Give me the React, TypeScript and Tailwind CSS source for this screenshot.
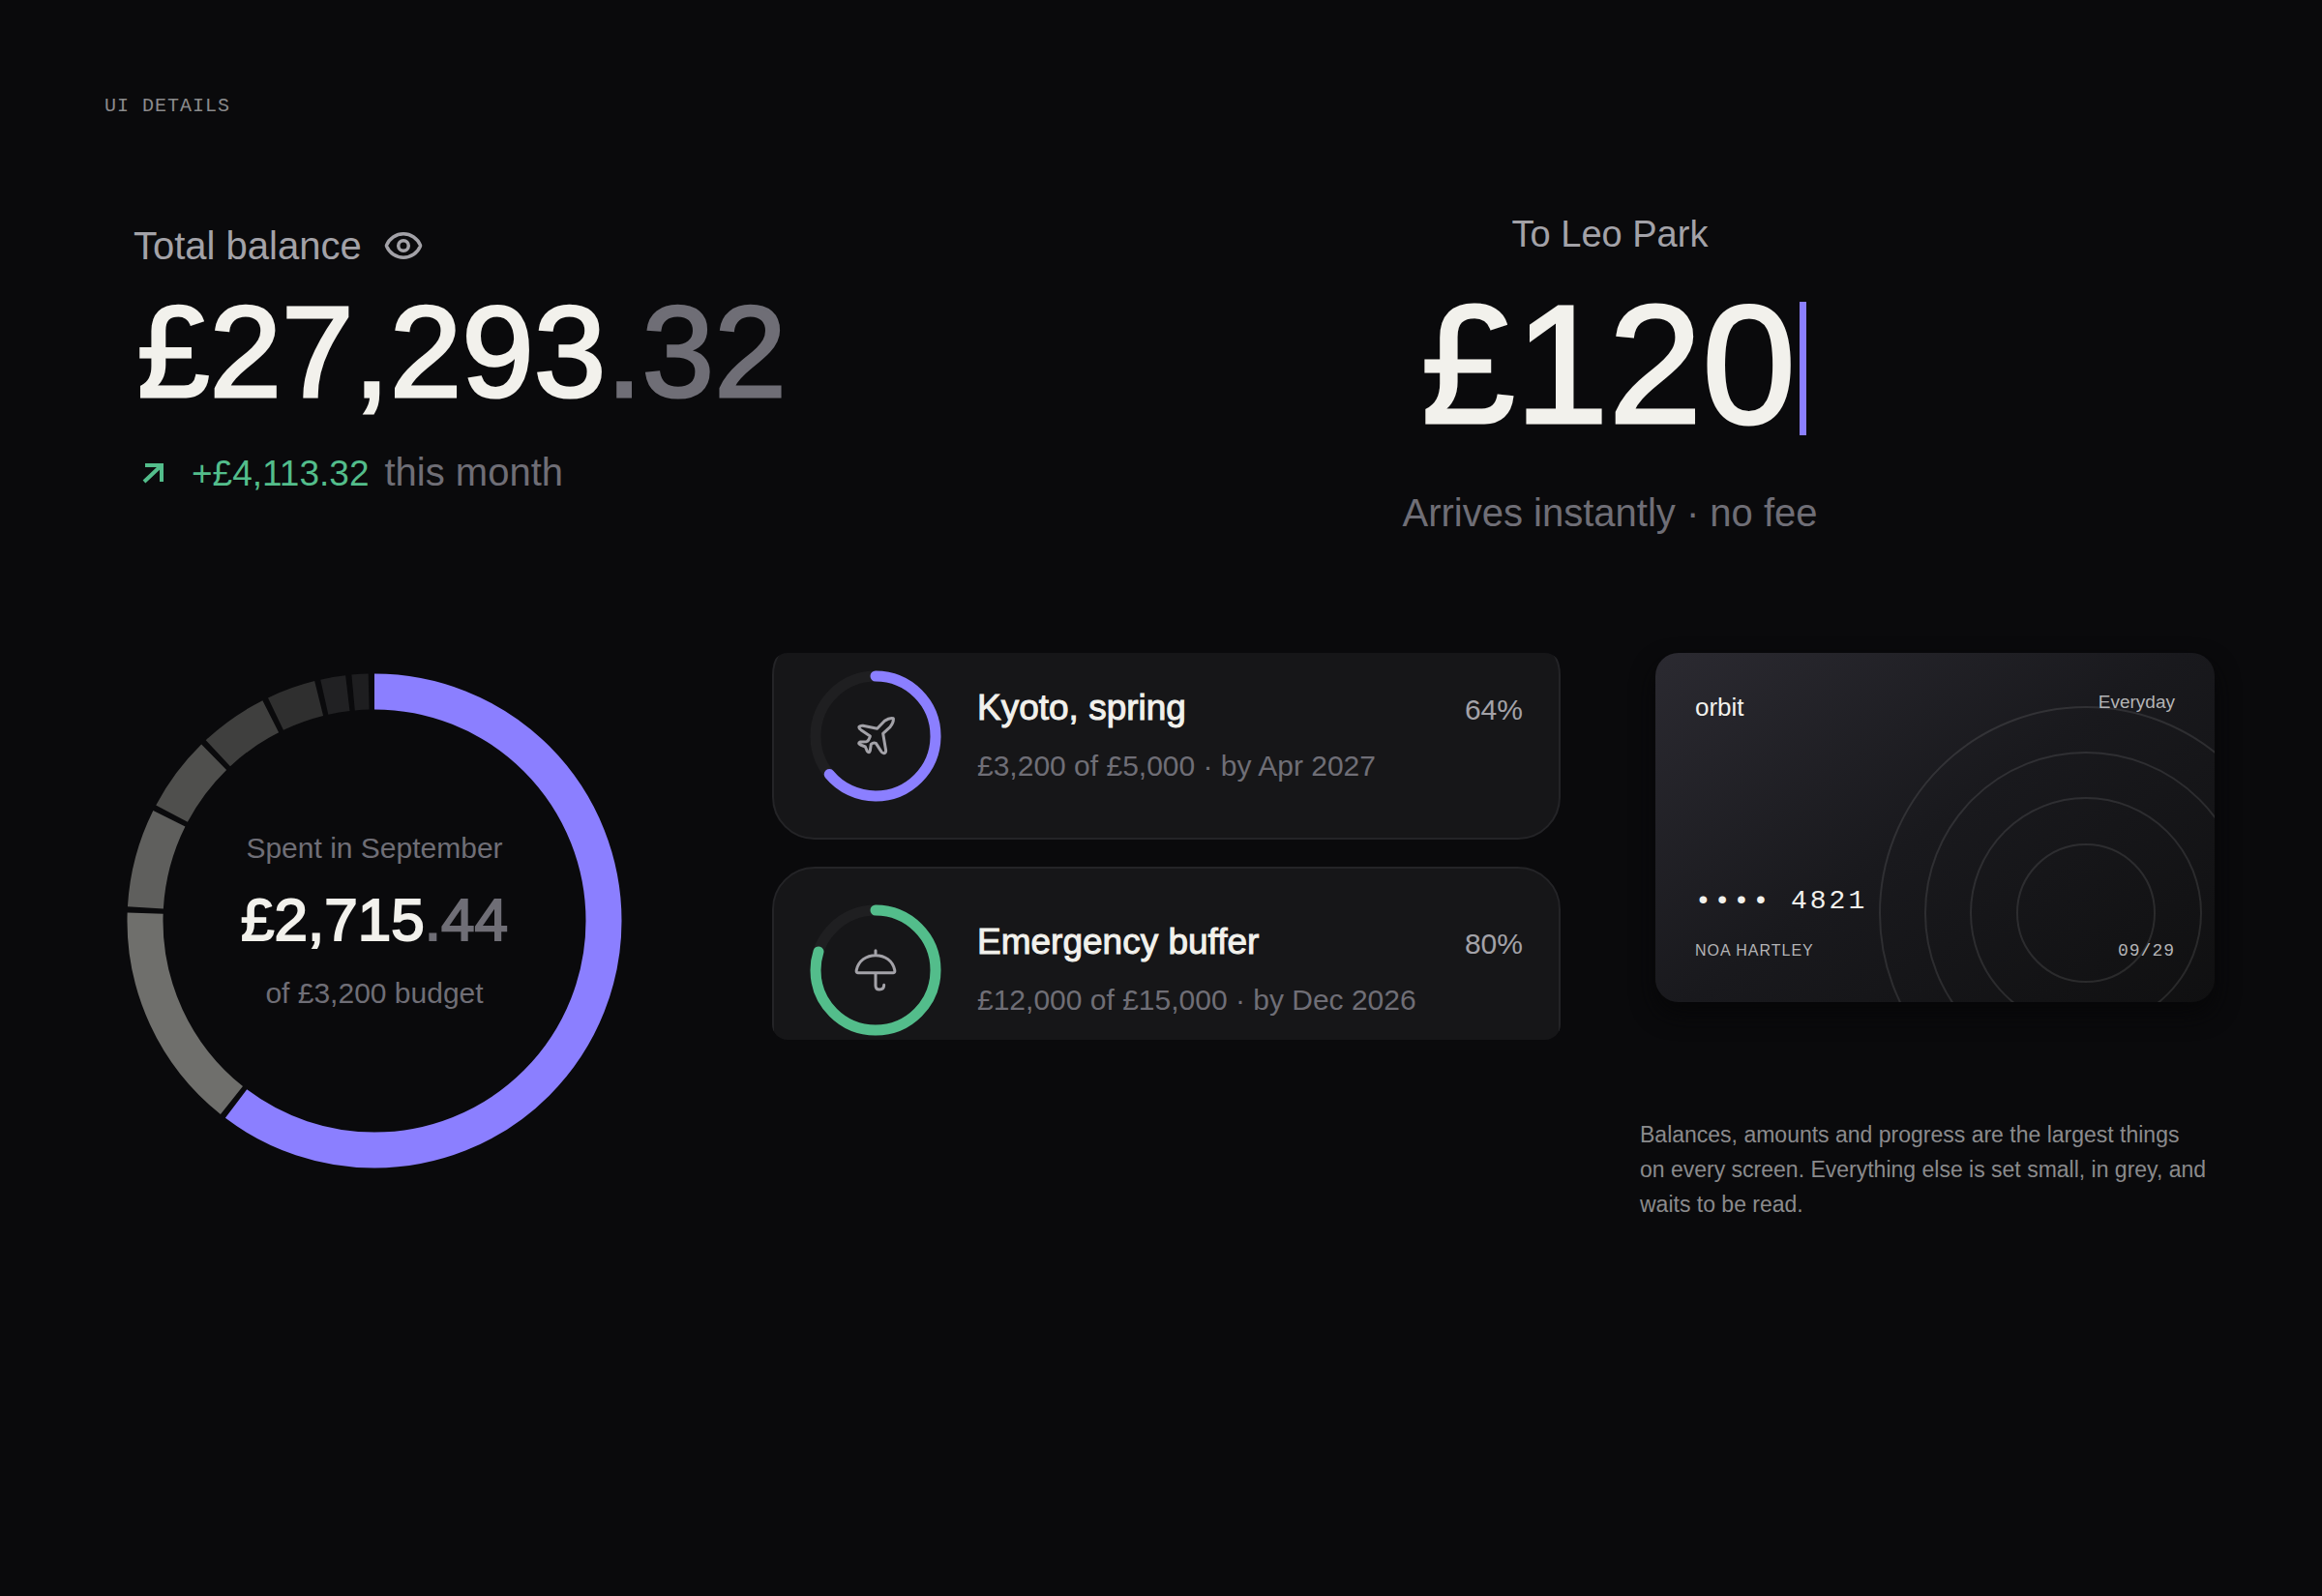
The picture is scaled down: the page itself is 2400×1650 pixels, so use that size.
import { Eye } from "lucide-react";
import type { ReactNode } from "react";

const spending = [
  { name: "Housing", span: 218.5, color: "#8b7fff" },
  { name: "Groceries", span: 54.8, color: "#6f6f6c" },
  { name: "Transport", span: 24.6, color: "#5f5f5d" },
  { name: "Eating out", span: 19.1, color: "#4f4f4d" },
  { name: "Shopping", span: 17.5, color: "#3f3f3e" },
  { name: "Bills", span: 12.9, color: "#2f2f2f" },
  { name: "Health", span: 7.3, color: "#212123" },
  { name: "Other", span: 5.3, color: "#1e1e20" },
];

const plane = (
  <path d="M110 82 133 58Q148 47 160 50Q162 62 150 77L128 97L137 150Q137 158 130 158Q125 158 122 152L106 127Q98 124 91 130L88 150Q85 160 79 152L73 138L58 132Q48 127 58 123L77 122Q84 120 88 105L60 86Q52 80 54 76Q58 72 66 73Z" />
);

const umbrella = (
  <path d="M105 44v15M50 113Q44 113 46 104C52 76 76 59 105 59C134 59 158 76 164 104Q166 113 160 113ZM105 113v40q0 12 12 12q14 0 14-14" />
);

const goals = [
  { title: "Kyoto, spring", detail: "£3,200 of £5,000 · by Apr 2027", percent: 64, color: "#8b7fff", icon: plane },
  { title: "Emergency buffer", detail: "£12,000 of £15,000 · by Dec 2026", percent: 80, color: "#53bd8b", icon: umbrella },
];

function Balance() {
  return (
    <section className="pl-[30px] pt-3">
      <div className="flex items-center gap-[22px] text-[40px] leading-[48px] text-[#a3a2a8]">
        <span>Total balance</span>
        <button type="button" aria-label="Hide balance">
          <Eye size={42} strokeWidth={2} />
        </button>
      </div>
      <p className="mt-[18px] pl-1 text-[134px] leading-[136px] text-[#f2f1ec] [-webkit-text-stroke:3px]">
        £27,293<span className="text-[#6f6e76]">.32</span>
      </p>
      <p className="mt-8 flex items-baseline gap-4 text-[40px] leading-[48px] text-[#6f6e76]">
        <span className="flex items-baseline gap-7 text-[37px] text-[#53bd8b]">
          <svg className="ml-2" width="24" height="24" viewBox="0 0 24 24" fill="none" stroke="currentColor" strokeWidth="4" aria-hidden="true">
            <path d="M3 20 21 3M4 3h17v17" />
          </svg>
          +£4,113.32
        </span>
        <span>this month</span>
      </p>
    </section>
  );
}

function Transfer() {
  return (
    <section className="flex flex-col items-center">
      <h2 className="text-[38px] leading-[48px] text-[#a3a2a8]">To Leo Park</h2>
      <p className="mt-[46px] flex items-start pl-2 text-[174px] leading-[130px] text-[#f2f1ec] [-webkit-text-stroke:3px]">
        £120
        <span className="ml-1 h-[138px] w-[7px] bg-[#8b7fff]" />
      </p>
      <p className="mt-14 text-[40px] leading-[48px] text-[#6f6e76]">Arrives instantly · no fee</p>
    </section>
  );
}

function SpendingRing() {
  let start = 0;
  const arcs = spending.map((s) => {
    const arc = { ...s, start };
    start += s.span;
    return arc;
  });

  return (
    <section className="ml-[23px] mt-[21px] grid w-[512px] place-items-center">
      <svg className="col-start-1 row-start-1" width="512" height="512" viewBox="0 0 512 512" fill="none" aria-hidden="true">
        {arcs.map((a) => (
          <circle
            key={a.name}
            cx="256"
            cy="256"
            r="237"
            stroke={a.color}
            strokeWidth="37"
            pathLength="360"
            strokeDasharray={`${a.span - 1.4} 360`}
            transform={`rotate(${a.start - 90} 256 256)`}
          />
        ))}
      </svg>
      <div className="col-start-1 row-start-1 text-center text-[30px] leading-[36px] text-[#6f6e76]">
        <p>Spent in September</p>
        <p className="mb-[22px] mt-5 text-[62px] leading-[72px] text-[#f2f1ec] [-webkit-text-stroke:2px]">
          £2,715<span className="text-[#6f6e76]">.44</span>
        </p>
        <p>of £3,200 budget</p>
      </div>
    </section>
  );
}

function GoalRing({ percent, color, children }: { percent: number; color: string; children: ReactNode }) {
  return (
    <div className="grid shrink-0 place-items-center">
      <svg className="col-start-1 row-start-1" width="136" height="136" viewBox="0 0 136 136" fill="none" strokeWidth="11" aria-hidden="true">
        <circle cx="68" cy="68" r="62" stroke="#1f1f21" />
        <circle
          cx="68"
          cy="68"
          r="62"
          stroke={color}
          strokeLinecap="round"
          pathLength="100"
          strokeDasharray={`${percent} 100`}
          transform="rotate(-90 68 68)"
        />
      </svg>
      <svg
        className="col-start-1 row-start-1 text-[#a3a2a8]"
        width="70"
        height="70"
        viewBox="0 0 210 210"
        fill="none"
        stroke="currentColor"
        strokeWidth="9"
        strokeLinecap="round"
        strokeLinejoin="round"
        aria-hidden="true"
      >
        {children}
      </svg>
    </div>
  );
}

function Goals() {
  return (
    <section className="pr-[82px]">
      <div className="h-[400px] overflow-hidden rounded-2xl">
        <ul className="-mt-[21px] flex flex-col gap-7">
          {goals.map((g) => (
            <li key={g.title} className="flex h-[214px] items-center gap-[37px] rounded-[44px] border-2 border-[#242427] bg-[#161618] px-[37px]">
              <GoalRing percent={g.percent} color={g.color}>
                {g.icon}
              </GoalRing>
              <div className="flex-1">
                <div className="flex items-baseline justify-between leading-[44px]">
                  <h3 className="text-[37px] text-[#f2f1ec] [-webkit-text-stroke:1px]">{g.title}</h3>
                  <span className="text-[30px] text-[#a3a2a8]">{g.percent}%</span>
                </div>
                <p className="mt-4 text-[30px] leading-[40px] text-[#6f6e76]">{g.detail}</p>
              </div>
            </li>
          ))}
        </ul>
      </div>
    </section>
  );
}

function BankCard() {
  return (
    <div className="relative ml-4 mr-[3px] flex h-[361px] flex-col overflow-hidden rounded-3xl bg-linear-[145deg,#2b2a31,#19191d_50%,#101011] px-[41px] pb-10 pt-[37px] shadow-[0_12px_24px_#070708]">
      <svg className="absolute bottom-0 right-0" width="350" height="310" viewBox="0 0 350 310" fill="none" stroke="#ffffff" strokeOpacity="0.1" strokeWidth="2" aria-hidden="true">
        {[71, 119, 166, 213].map((r) => (
          <circle key={r} cx="217" cy="218" r={r} />
        ))}
      </svg>
      <div className="relative flex justify-between">
        <span className="pt-[3px] text-[26px] leading-[32px] text-[#f2f1ec]">orbit</span>
        <span className="text-[19px] leading-[28px] text-[#b4b4b6]">Everyday</span>
      </div>
      <p className="relative mt-auto font-['Liberation_Mono',monospace] text-[28px] leading-[32px] tracking-[3px] text-[#f2f1ec]">•••• 4821</p>
      <div className="relative mt-[22px] flex items-baseline justify-between text-[16px] leading-[26px] tracking-[1px] text-[#b4b4b6]">
        <span>NOA HARTLEY</span>
        <span className="font-['Liberation_Mono',monospace] text-[18px]">09/29</span>
      </div>
    </div>
  );
}

export default function App() {
  return (
    <main className="min-h-screen bg-[#0a0a0c] px-[108px] pt-[96px] font-['Liberation_Sans',sans-serif]">
      <h1 className="font-['Liberation_Mono',monospace] text-[20px] leading-[28px] tracking-[1px] text-[#8a8a8c]">UI DETAILS</h1>

      <div className="mt-[94px] grid grid-cols-[928fr_1256fr]">
        <Balance />
        <Transfer />
      </div>

      <div className="mt-[121px] grid grid-cols-[690fr_897fr_597fr] items-start">
        <SpendingRing />
        <Goals />
        <div>
          <BankCard />
          <p className="mt-[119px] text-[23px] leading-[36px] text-[#8a8a8c]">
            Balances, amounts and progress are the largest things
            <br />
            on every screen. Everything else is set small, in grey, and waits to be read.
          </p>
        </div>
      </div>
    </main>
  );
}
